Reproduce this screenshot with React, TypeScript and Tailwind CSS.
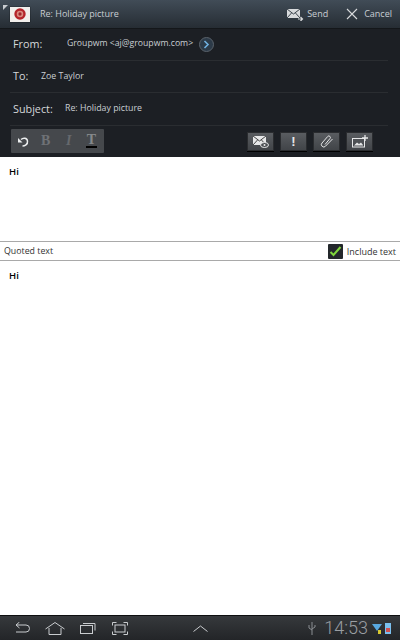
import React from "react";

const F = "font-['Open_Sans','Noto_Sans',sans-serif]";

function TB({ children }: { children: React.ReactNode }) {
  return (
    <div className="w-[27px] h-[19px] flex items-center justify-center bg-gradient-to-b from-[#5a5d61] to-[#414448] border border-[#2a2c2f] shadow-[0_1px_0_#000]">
      {children}
    </div>
  );
}

function Row({ h, children, cls = "" }: { h: number; children: React.ReactNode; cls?: string }) {
  return (
    <div style={{ height: h }} className={`flex items-center ml-[10px] mr-[12px] border-b border-[#2a2d31] ${cls}`}>
      {children}
    </div>
  );
}

export default function App() {
  return (
    <div className={`w-[400px] h-[640px] flex flex-col bg-white overflow-hidden ${F}`}>
      {/* Title bar */}
      <div className="h-[29px] shrink-0 flex items-center bg-gradient-to-b from-[#414c57] to-[#262d34] border-b border-[#14171a] relative">
        <div className="absolute left-[3px] top-[5px] w-0 h-0 border-t-[5px] border-t-[#c8ccd0] border-r-[5px] border-r-transparent" />
        <div className="ml-[10px] w-[20px] h-[15px] bg-[#f2efec] flex items-center justify-center shadow-[0_0_1px_#000]">
          <svg width="12" height="12" viewBox="0 0 11 11">
            <circle cx="5.5" cy="5.5" r="5.2" fill="#b5242a" />
            <circle cx="5.5" cy="5.5" r="3" fill="#d98a80" />
            <circle cx="5.5" cy="5.5" r="1.5" fill="#a0252a" />
          </svg>
        </div>
        <span className="ml-[10px] text-[9px] text-[#c9ced3]">Re: Holiday picture</span>
        <div className="ml-auto flex items-center">
          <svg width="17" height="13" viewBox="0 0 17 13">
            <rect x="0" y="1" width="13" height="9" fill="#d8dadc" />
            <path d="M0 1l6.500 5L13 1M0 10l4.500-5M13 10L8.500 5" stroke="#3a424a" strokeWidth="1" fill="none" />
            <path d="M11 11h4M13.500 9l2 2-2 2" stroke="#d8dadc" strokeWidth="1.200" fill="none" />
          </svg>
          <span className="ml-[3px] text-[9px] text-[#c9ced3]">Send</span>
          <svg className="ml-[18px]" width="12" height="12" viewBox="0 0 12 12">
            <path d="M1 1l10 10M11 1L1 11" stroke="#d8dadc" strokeWidth="1.100" fill="none" />
          </svg>
          <span className="ml-[6px] mr-[8px] text-[9px] text-[#c9ced3]">Cancel</span>
        </div>
      </div>

      {/* Header panel */}
      <div className="h-[128px] shrink-0 bg-[#1c1f24] flex flex-col">
        <Row h={32} cls="pb-[1px]">
          <span className="ml-[3px] w-[54px] text-[10.800px] text-[#d5d8da]">From:</span>
          <span className="text-[8.700px] text-[#c9ced3]">Groupwm &lt;aj@groupwm.com&gt;</span>
          <div className="ml-[6px] w-[15px] h-[15px] rounded-full border border-[#5a626b] bg-[#2c3a48] flex items-center justify-center">
            <svg width="7" height="9" viewBox="0 0 7 9">
              <path d="M1.500 1l3.500 3.500L1.500 8" stroke="#6fb0e0" strokeWidth="1.600" fill="none" />
            </svg>
          </div>
        </Row>
        <Row h={32}>
          <span className="ml-[3px] w-[28px] text-[10.800px] text-[#d5d8da]">To:</span>
          <span className="text-[8.800px] text-[#c9ced3]">Zoe Taylor</span>
        </Row>
        <Row h={33}>
          <span className="ml-[3px] w-[52px] text-[10.800px] text-[#d5d8da]">Subject:</span>
          <span className="text-[8.800px] text-[#c9ced3]">Re: Holiday picture</span>
        </Row>
        <div className="flex items-center ml-[11px] mr-[27px] mt-[3px]">
          <div className="w-[93px] h-[24px] bg-[#45484c] rounded-[1px] flex items-center">
            <svg className="ml-[6px]" width="12" height="11" viewBox="0 0 12 11">
              <path d="M4 3.500C6 1.500 10 1.500 10.500 5S7.500 10 5.500 10" stroke="#eceeef" strokeWidth="1.500" fill="none" />
              <path d="M1 2v4.500h4.500z" fill="#eceeef" />
            </svg>
            <span className="ml-[12px] w-[9px] text-[14px] font-bold text-[#6f7276] font-['Liberation_Serif',serif] leading-none">B</span>
            <span className="ml-[16px] w-[6px] text-[14px] italic font-bold text-[#66696d] font-['Liberation_Serif',serif] leading-none">I</span>
            <div className="ml-[14px] flex flex-col items-center w-[11px]">
              <span className="text-[14px] font-bold text-[#85888b] font-['Liberation_Serif',serif] leading-[12px]">T</span>
              <div className="w-[11px] h-[2px] bg-black" />
            </div>
          </div>
          <div className="ml-auto flex gap-[6px]">
            <TB>
              <svg width="16" height="13" viewBox="0 0 16 13">
                <rect x="0" y="1" width="13" height="9" fill="#e6e7e8" />
                <path d="M0 1l6.500 5L13 1M0 10l4.500-5M13 10L8.500 5" stroke="#444" strokeWidth="1" fill="none" />
                <ellipse cx="11.500" cy="10" rx="4" ry="2.500" fill="#4a4d51" stroke="#e6e7e8" strokeWidth="1" />
                <circle cx="11.500" cy="10" r="1" fill="#e6e7e8" />
              </svg>
            </TB>
            <TB>
              <span className="text-[13px] font-bold text-[#e6e7e8] leading-none font-['Liberation_Sans',sans-serif]">!</span>
            </TB>
            <TB>
              <svg width="14" height="13" viewBox="0 0 14 13">
                <path d="M5 9.500L10 3.500a1.500 1.500 0 0 0-2.300-2L2 8a2.300 2.300 0 0 0 3.500 3.200L12.500 4" stroke="#e6e7e8" strokeWidth="1" fill="none" />
              </svg>
            </TB>
            <TB>
              <svg width="16" height="13" viewBox="0 0 16 13">
                <rect x="0.500" y="3.500" width="12" height="8.500" fill="none" stroke="#e6e7e8" strokeWidth="1" />
                <path d="M2 10.500l3-3 2 1.500 2-1.500 2 2.500v.5H2z" fill="#e6e7e8" />
                <path d="M13 0v6M10 3h6" stroke="#e6e7e8" strokeWidth="1.300" />
              </svg>
            </TB>
          </div>
        </div>
      </div>

      {/* Body */}
      <div className="h-[84px] shrink-0 bg-white pl-[9px] pt-[8px] text-[9.500px] font-semibold text-black leading-[13px]">Hi</div>

      <div className="h-[20px] shrink-0 bg-white border-y border-[#a9a9a9] flex items-center pl-[4px] pr-[4px] pt-[1px] text-[#333]">
        <span className="text-[8.800px]">Quoted text</span>
        <div className="ml-auto w-[15px] h-[15px] rounded-[1px] bg-[#23272b] flex items-center justify-center">
          <svg width="13" height="11" viewBox="0 0 13 11">
            <path d="M1.500 6l3 3 7-8" stroke="#7fd63c" strokeWidth="2" fill="none" />
          </svg>
        </div>
        <span className="ml-[4px] text-[9px]">Include text</span>
      </div>

      <div className="flex-1 bg-white pl-[9px] pt-[8px] text-[9.500px] font-semibold text-black leading-[13px]">Hi</div>

      {/* Nav bar */}
      <div className="h-[25px] shrink-0 bg-gradient-to-b from-[#36393c] to-[#232528] border-t border-[#0e0f10] flex items-center relative">
        <svg className="ml-[15px]" width="16" height="12" viewBox="0 0 16 12">
          <path d="M1 3h10a3.500 3.500 0 0 1 0 7H1" stroke="#c9cccf" strokeWidth="1" fill="none" />
          <path d="M4.500 0L1 3l3.500 3" stroke="#c9cccf" strokeWidth="1" fill="none" />
        </svg>
        <svg className="ml-[14px]" width="20" height="13" viewBox="0 0 20 13">
          <path d="M0.500 7L10 0.500 19.500 7M4 6v6.500h12V6" stroke="#c9cccf" strokeWidth="1" fill="none" />
        </svg>
        <svg className="ml-[15px]" width="16" height="12" viewBox="0 0 16 12">
          <rect x="0.500" y="3.500" width="12" height="8" fill="none" stroke="#c9cccf" strokeWidth="1" />
          <path d="M3 1.500h12v7" stroke="#c9cccf" strokeWidth="1" fill="none" />
        </svg>
        <svg className="ml-[16px]" width="16" height="13" viewBox="0 0 16 13">
          <path d="M0.500 3.500v-3h4M11.500 0.500h4v3M15.500 9.500v3h-4M4.500 12.500h-4v-3" stroke="#c9cccf" strokeWidth="1" fill="none" />
          <rect x="3" y="3" width="10" height="7" fill="none" stroke="#c9cccf" strokeWidth="1" />
        </svg>
        <svg className="ml-[65px]" width="15" height="7" viewBox="0 0 15 7">
          <path d="M0.500 6.500L7.500 1l7 5.500" stroke="#c9cccf" strokeWidth="1" fill="none" />
        </svg>
        <div className="ml-auto flex items-center">
          <svg width="8" height="13" viewBox="0 0 8 13">
            <path d="M4 0v13M1 3v3l3 2M7 3v2l-3 2" stroke="#8a8e92" strokeWidth="1" fill="none" />
          </svg>
          <span className="ml-[8px] text-[18px] font-light text-[#9a9ea2] font-['Roboto',sans-serif] leading-none">14:53</span>
          <svg className="ml-[4px]" width="10" height="11" viewBox="0 0 10 11">
            <path d="M0 1h10L5 8z" fill="#58a8e0" />
            <rect x="6" y="7" width="3" height="4" fill="#d8c830" />
          </svg>
          <div className="ml-[3px] mr-[9px] w-[6px] h-[11px] bg-[#7cc0ee] relative">
            <div className="absolute left-[1px] top-[5px] w-[4px] h-[4px] bg-[#d05050]" />
          </div>
        </div>
      </div>
    </div>
  );
}
